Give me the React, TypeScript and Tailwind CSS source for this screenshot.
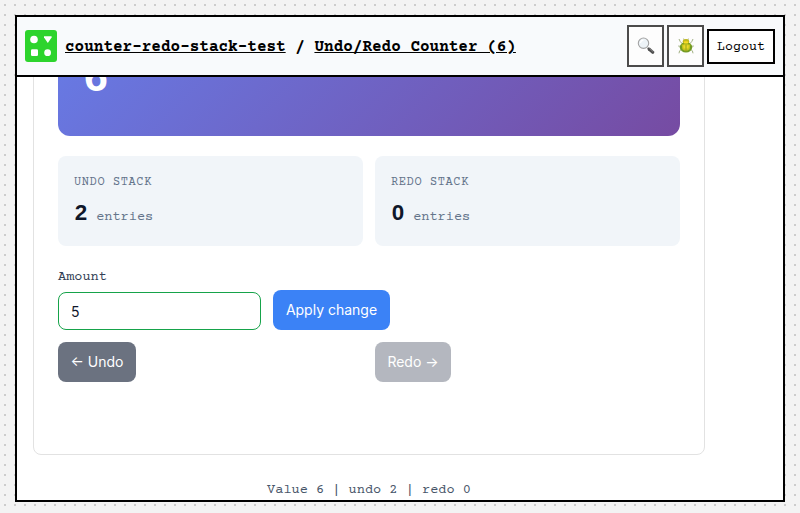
import React from "react";

function Logo() {
  return (
    <svg className="size-8 shrink-0" viewBox="0 0 32 32">
      <rect width="32" height="32" rx="3" fill="#2dd42d" />
      <g fill="#fff">
        <circle cx="9" cy="9.5" r="3.8" />
        <path d="M19 6.2h7.6v1.2L22.8 13l-3.8-5.6z" />
        <rect x="6" y="19.2" width="7" height="6.8" rx="1.2" />
        <circle cx="22.6" cy="22.7" r="3.4" />
      </g>
    </svg>
  );
}

function Magnifier() {
  return (
    <svg className="h-[18px] w-[18px]" viewBox="0 0 18 18">
      <path d="M10.7 10.7l1.6 1.6" stroke="#888" strokeWidth="1.6" />
      <path d="M12 12l3.8 3.3" stroke="#505050" strokeWidth="3" strokeLinecap="round" />
      <path d="M12.4 11.4l3.6 3.1" stroke="#8b8b8b" strokeWidth="0.8" />
      <circle cx="6.5" cy="6.2" r="5.2" fill="#edf3f7" stroke="#a3a3a3" strokeWidth="1.1" />
      <path d="M3.4 5.8a3.4 3.4 0 0 1 3-2.7" stroke="#fff" strokeWidth="1.2" fill="none" />
    </svg>
  );
}

function Beetle() {
  return (
    <svg className="h-[18px] w-[18px]" viewBox="0 0 18 18">
      <g fill="none" stroke="#a3b184" strokeWidth="1">
        <path d="M5 6.5L3.2 4.5 2 2M13 6.5l1.8-2L16 2M4.5 9.5L1.2 9M13.5 9.5l3.3-.5M5 12l-2.4 1.8L2 16.3M13 12l2.4 1.8.6 2.5M7.4 3.5L6.6 1.6M10.6 3.5l.8-1.9" />
      </g>
      <ellipse cx="9" cy="4.7" rx="3.3" ry="2.6" fill="#c1b91c" />
      <ellipse cx="9" cy="10.3" rx="6.2" ry="5.2" fill="#729b24" />
      <path d="M4.6 7.3Q9 4.2 13.4 7.3L12.6 12.3Q9 15.4 5.4 12.3z" fill="#c4c51d" />
      <path d="M5.2 7.2Q9 5 12.8 7.2" fill="none" stroke="#6d8d1e" strokeWidth="0.8" />
      <ellipse cx="9" cy="5.4" rx="2.5" ry="1.2" fill="#f8dc24" />
      <path d="M9 7.5v7.5" stroke="#8d9720" strokeWidth="0.7" />
      <path d="M6.2 8.2h2.1v3.2H6.6zM9.7 8.2h2.1l-.4 3.2H9.7z" fill="#ecd92b" />
    </svg>
  );
}

function StackCard({ label, count }: { label: string; count: number }) {
  return (
    <div className="h-[90px] flex-1 rounded-lg bg-[#f1f5f9] px-4 pt-[19px]">
      <div className="text-xs leading-4 tracking-[0.6px] text-[#64748b]">{label}</div>
      <div className="mt-[6px] flex items-baseline whitespace-pre text-[13.6px] leading-[32px] text-[#64748b]">
        <span className="w-[14px] text-center font-['Liberation_Sans',sans-serif] text-[22.4px] font-bold text-[#0f172a]">{count}</span>
        <span> entries</span>
      </div>
    </div>
  );
}

function Separator() {
  return <span className="font-['Liberation_Mono',monospace]">|</span>;
}

export default function App() {
  return (
    <div className="h-[513px] w-[800px] overflow-hidden bg-[#f3f3f3] bg-[radial-gradient(#ccc_1px,transparent_1px)] bg-[size:10px_10px] p-[15px] font-['Courier_Prime','Courier_10_Pitch','FreeMono','Liberation_Mono',monospace]">
      <div className="flex h-[487px] w-[770px] flex-col overflow-hidden border-2 border-black bg-white">
        <header className="flex h-[60px] shrink-0 items-center border-b-2 border-black bg-[#f8fafc] px-2">
          <Logo />
          <h1 className="ml-2 whitespace-pre pt-0.5 text-base font-bold text-black">
            <a className="underline">counter-redo-stack-test</a> / <a className="underline">Undo/Redo Counter (6)</a>
          </h1>
          <div className="ml-auto flex items-center gap-[3px]">
            <button className="flex h-[42px] w-[37px] items-center justify-center border-2 border-[#4b4b4b] bg-[#fdfdfd]"><Magnifier /></button>
            <button className="flex h-[42px] w-[37px] items-center justify-center border-2 border-[#4b4b4b] bg-[#fdfdfd]"><Beetle /></button>
            <button className="h-[35px] w-[68px] border-2 border-black bg-white pt-1 text-[13.333px] text-black">Logout</button>
          </div>
        </header>
        <main className="flex min-h-0 flex-1 flex-col justify-end overflow-hidden pl-4">
          <section className="flex w-[672px] shrink-0 flex-col rounded-lg border border-[#e2e2e2] px-6 pb-[72px]">
            <div className="flex h-[138px] shrink-0 flex-col justify-end rounded-xl bg-[linear-gradient(135deg,#667eea_0%,#764ba2_100%)] px-[26px] pb-[42px] font-['Liberation_Sans',sans-serif] text-[43px] font-bold leading-[36px] text-white">6</div>
            <div className="mt-5 flex gap-3">
              <StackCard label="UNDO STACK" count={2} />
              <StackCard label="REDO STACK" count={0} />
            </div>
            <label className="mt-[21px] text-[13.6px] leading-5 text-[#334155]">Amount</label>
            <div className="mt-[3px] flex items-end gap-3 font-['Inter',sans-serif] text-[14px]">
              <div className="flex h-[38px] w-[203px] items-center rounded-lg border border-[#16a34a] bg-white px-3 text-[#0f172a]">5</div>
              <button className="h-10 w-[117px] rounded-lg bg-[#3b82f6] pb-px text-white">Apply change</button>
            </div>
            <div className="mt-3 grid grid-cols-2 gap-3 font-['Inter',sans-serif] text-[14px] text-white">
              <button className="h-10 w-[78px] rounded-lg bg-[#6b7280] pb-px">← Undo</button>
              <button className="h-10 w-[76px] rounded-lg bg-[#6b7280] pb-px opacity-50">Redo →</button>
            </div>
          </section>
          <footer className="mt-[25px] h-5 w-[672px] shrink-0 text-center text-[13.6px] leading-5 text-[#475569]">
            Value 6 <Separator /> undo 2 <Separator /> redo 0
          </footer>
        </main>
      </div>
    </div>
  );
}
